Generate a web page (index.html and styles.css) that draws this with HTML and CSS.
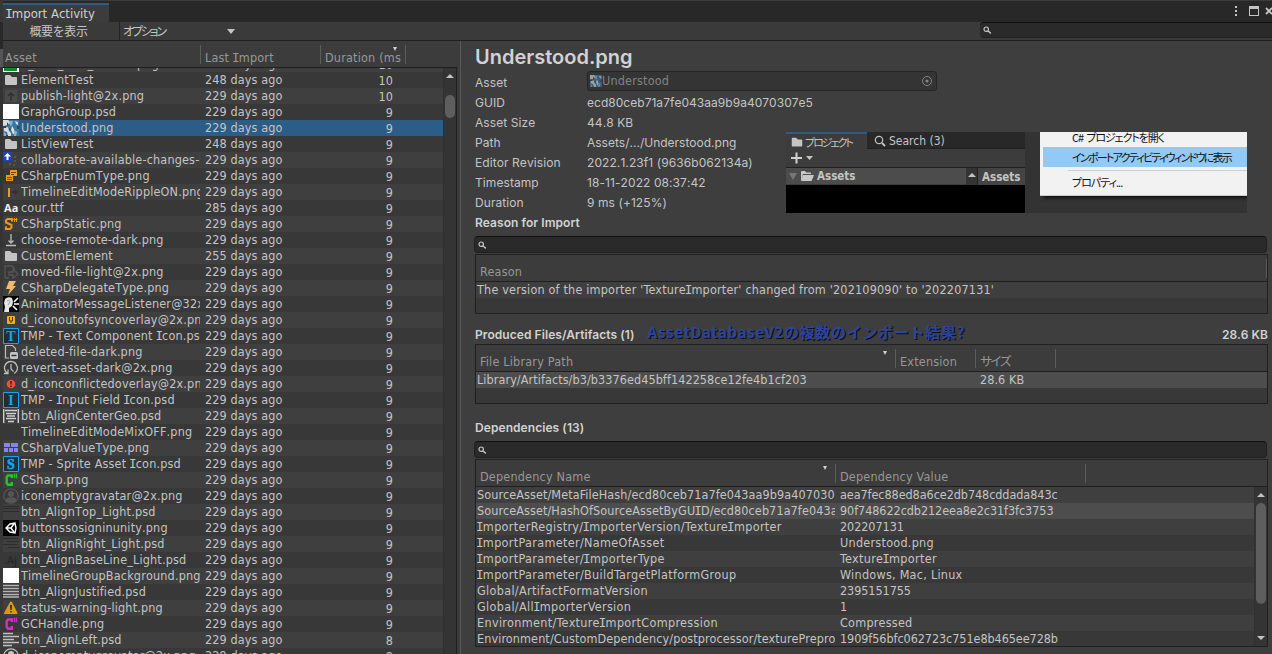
FILE: index.html
```html
<!DOCTYPE html>
<html lang="ja">
<head>
<meta charset="utf-8">
<title>Import Activity</title>
<link rel="stylesheet" href="styles.css">
</head>
<body>
<svg class="defs" width="0" height="0">
  <symbol id="folder" viewBox="0 0 16 16"><path fill="#c4c4c4" d="M2 4q0-1 1-1h4l2 2h4q1 0 1 1v6q0 1-1 1H3q-1 0-1-1z"/></symbol>
  <symbol id="lens" viewBox="0 0 9 9"><circle cx="3.2" cy="3.2" r="2.2" fill="none" stroke="#c4c4c4" stroke-width="1.2"/><path d="M4.8 4.8L7.8 7.4" stroke="#c4c4c4" stroke-width="1.4"/></symbol>
  <symbol id="thumb" viewBox="0 0 16 16"><path fill="#3a76a4" d="M0 0h16v16H0z"/><path fill="#d9dcda" d="M0 0h5l3 2-3 3-5 1zM1 8l4-1 1 4 2 2v3H5l-1-4-3-1zM9 6l2 3v5h-1l-2-4zM12 1l3 1v3l-2-1z"/><path fill="#8ab1ca" d="M6 1h4l-1 4-2 1zM11 10l3 2-1 4h-2zM1 12l2 2v2H1z"/><path fill="#37444c" d="M4 2l2 3-2 1zM0 6h3v2H0zM6 8l2 1-1 2zM14 6h2v3h-2zM3 15h2v1H3z"/></symbol>
  <symbol id="csharp" viewBox="0 0 16 16"><path fill="none" stroke="currentColor" stroke-width="2.400" d="M8.800 6V3.500H5L3.700 5v6L5 12.700h3.800V10"/><path fill="none" stroke="currentColor" stroke-width=".9" d="M11.500 1.500v5M13.500 1.500v5M10.500 3h4M10.500 5h4"/></symbol>
  <symbol id="person" viewBox="0 0 16 16"><circle cx="8" cy="8" r="7.200" fill="none" stroke="currentColor" stroke-width="1.200"/><circle cx="8" cy="6" r="3" fill="currentColor"/><path fill="currentColor" d="M2.500 13q0-3.500 3.500-3.500h4q3.500 0 3.500 3.500-5.500 4-11 0z"/></symbol>
</svg>
<div class="window">
  <div class="edge"><i></i><i></i><i></i><i></i><i></i></div>
  <div class="main">
    <div class="tabs">
      <div class="tab"><i class="cap">I</i>mport Activity</div>
      <svg class="controls" width="40" height="14" viewBox="0 0 40 14"><path fill="#c4c4c4" d="M3 2h2v2H3zM3 6h2v2H3zM3 10h2v2H3zM17 2h10v10H17zM18 5v6h8V5z" fill-rule="evenodd"/><path d="M34 4l6 6M40 4l-6 6" stroke="#c4c4c4" stroke-width="1.800"/></svg>
    </div>
    <div class="toolbar">
      <div class="btn overview">概要を表示</div>
      <div class="btn options"><span>オプション</span><i class="caret"></i></div>
      <div class="topsearch"><svg width="9" height="9"><use href="#lens"/></svg></div>
    </div>
    <div class="panes">
      <section class="list">
        <div class="thead"><span class="c1">Asset</span><span class="c2">Last <i class="cap">I</i>mport</span><span class="c3">Duration (ms<i class="sort"></i></span></div>
        <div class="body">
          <div class="rows">
            <div class="row"><svg><path fill="#fff" d="M0 0h16v16H0z"/><path fill="#118a2c" d="M1 0h13v15H1z"/></svg><b>d_tree_icon_branch.png</b><span>229 days ago</span><em>10</em></div>
            <div class="row"><svg><use href="#folder"/></svg><b>ElementTest</b><span>248 days ago</span><em>10</em></div>
            <div class="row"><svg><path fill="#4b4b4b" d="M2 2h12v12H2z"/><path fill="none" stroke="#303030" stroke-width="1.500" d="M8 13V5M5 8l3-3 3 3"/></svg><b>publish-light@2x.png</b><span>229 days ago</span><em>10</em></div>
            <div class="row"><svg><path fill="#fff" d="M0 0h16v15H0z"/></svg><b>GraphGroup.psd</b><span>229 days ago</span><em>9</em></div>
            <div class="row selected"><svg><use href="#thumb"/></svg><b>Understood.png</b><span>229 days ago</span><em>9</em></div>
            <div class="row"><svg><use href="#folder"/></svg><b>ListViewTest</b><span>248 days ago</span><em>9</em></div>
            <div class="row"><svg><path fill="#1746b8" d="M0 0h9v9H0z"/><path fill="#fff" d="M4.500 1L8 4.500H5.500V8h-2V4.500H1z"/><path fill="#555" d="M11 4h2v2h-2zM11 8h2v2h-2zM6 11h2v2H6zM10 12h2v2h-2z"/></svg><b>collaborate-available-changes-light.png</b><span>229 days ago</span><em>9</em></div>
            <div class="row"><svg><path fill="#e89d1c" d="M7 2h7v6H7zM3 7h7v6H3z"/><path stroke="#6e4a0c" d="M8 4.500h5M8 6.500h3M4 9.500h5M4 11.500h5"/></svg><b>CSharpEnumType.png</b><span>229 days ago</span><em>9</em></div>
            <div class="row"><svg><path fill="#d9a514" d="M5 4h2v9H5z"/><path fill="#303030" d="M9 7h3V5l3 3-3 3V9H9z"/></svg><b>TimelineEditModeRippleON.png</b><span>229 days ago</span><em>9</em></div>
            <div class="row"><svg><text class="aa" x="1" y="12">Aa</text></svg><b>cour.ttf</b><span>285 days ago</span><em>9</em></div>
            <div class="row"><svg><path fill="none" stroke="#e59a1c" stroke-width="2" d="M9 5.500V3H4.500L3 4.500v2L8.500 9v2.500L7 13H3v-2.500"/><path stroke="#e59a1c" stroke-width="1" d="M11.500 2v4M13.500 2v4M10.500 3.500h4"/></svg><b>CSharpStatic.png</b><span>229 days ago</span><em>9</em></div>
            <div class="row"><svg><path fill="none" stroke="#bdbdbd" stroke-width="1.300" d="M8 2v9M5.500 8.500L8 11l2.500-2.500M3 13.500h10"/></svg><b>choose-remote-dark.png</b><span>229 days ago</span><em>9</em></div>
            <div class="row"><svg><use href="#folder"/></svg><b>CustomElement</b><span>255 days ago</span><em>9</em></div>
            <div class="row"><svg><path fill="none" stroke="#555" stroke-width="1.300" d="M2 14V2h7l3 3M2 14h4M6 8h4V5l5 5-5 4v-3H6z"/></svg><b>moved-file-light@2x.png</b><span>229 days ago</span><em>9</em></div>
            <div class="row"><svg><path fill="#f0b96c" d="M6 1h7l-3 5h3l-8 9 2-6H3z"/></svg><b>CSharpDelegateType.png</b><span>229 days ago</span><em>9</em></div>
            <div class="row"><svg><path d="M0 0h16v16H0z"/><path fill="#e6e6e6" d="M2 3q3-3 7-1l1 4-1 4-3 2v4H1l1-5-1-4z"/><path fill="none" stroke="#999" d="M4 5q3-2 3 1l-2 3"/><path stroke="#fff" stroke-width="1.600" d="M11 6l4-4M11 8h5M10 10l4 4"/></svg><b>AnimatorMessageListener@32x.png</b><span>229 days ago</span><em>9</em></div>
            <div class="row"><svg><rect x="4" y="4" width="8" height="8" rx="1" fill="#efae22"/><path fill="none" stroke="#4b3c16" d="M6.500 5v4h3V5M8 9v2"/></svg><b>d_iconoutofsyncoverlay@2x.png</b><span>229 days ago</span><em>9</em></div>
            <div class="row"><svg><path class="tile" d="M.5.5h15v15H.5z"/><text class="tmp" x="8" y="13">T</text></svg><b>TMP - Text Component <i class="cap">I</i>con.psd</b><span>229 days ago</span><em>9</em></div>
            <div class="row"><svg><path fill="none" stroke="#bdbdbd" stroke-width="1.200" d="M6 14H2.500V1.500h7l3 3V7"/><rect x="7" y="8" width="8" height="7" rx="1.500" fill="#c4c4c4"/><path stroke="#333" stroke-width="1.500" d="M8.500 11.500h5"/></svg><b>deleted-file-dark.png</b><span>229 days ago</span><em>9</em></div>
            <div class="row"><svg><path fill="none" stroke="#bdbdbd" stroke-width="1.300" d="M5 13.500Q1 11 1.500 7 3 1.500 8 1.500t6.500 6q0 4-3.500 6M8 4v5l2.500 2.500M1 13.500h4v-4"/></svg><b>revert-asset-dark@2x.png</b><span>229 days ago</span><em>9</em></div>
            <div class="row"><svg><circle cx="8" cy="8" r="4.300" fill="#ef4c40"/><path fill="#4a1511" d="M7.300 5h1.400v3.500H7.300zM7.300 9.500h1.400V11H7.300z"/></svg><b>d_iconconflictedoverlay@2x.png</b><span>229 days ago</span><em>9</em></div>
            <div class="row"><svg><path class="tile" d="M.5.5h15v15H.5z"/><text class="tmp" x="8" y="13">I</text></svg><b>TMP - <i class="cap">I</i>nput Field <i class="cap">I</i>con.psd</b><span>229 days ago</span><em>9</em></div>
            <div class="row"><svg><path stroke="#d0d0d0" stroke-width="1.400" d="M.7 1v14M15.300 1v14M2 2.500h12M3 5.500h10M4 8h8M3 10.500h10M5 13.500h6"/></svg><b>btn_AlignCenterGeo.psd</b><span>229 days ago</span><em>9</em></div>
            <div class="row"><svg></svg><b>TimelineEditModeMixOFF.png</b><span>229 days ago</span><em>9</em></div>
            <div class="row"><svg><path fill="#8684e6" d="M1 3h6v4H1zM8 3h7v4H8zM1 8h4v4H1zM6 8h4v4H6zM11 8h4v4h-4z"/></svg><b>CSharpValueType.png</b><span>229 days ago</span><em>9</em></div>
            <div class="row"><svg><path class="tile" d="M.5.5h15v15H.5z"/><text class="tmp heavy" x="8" y="13">S</text></svg><b>TMP - Sprite Asset <i class="cap">I</i>con.psd</b><span>229 days ago</span><em>9</em></div>
            <div class="row"><svg class="green"><use href="#csharp"/></svg><b>CSharp.png</b><span>229 days ago</span><em>9</em></div>
            <div class="row"><svg class="dim"><use href="#person"/></svg><b>iconemptygravatar@2x.png</b><span>229 days ago</span><em>9</em></div>
            <div class="row"><svg><path stroke="#2c2c2c" d="M0 2.500h16M0 4.500h16M0 7.500h16"/></svg><b>btn_AlignTop_Light.psd</b><span>229 days ago</span><em>9</em></div>
            <div class="row"><svg><path d="M0 0h16v16H0z"/><path fill="none" stroke="#fff" stroke-width="1.400" d="M3 8l4-4 5-1 1 5-1 5-5-1zM3 8h5M8 8l3-4M8 8l3 4"/></svg><b>buttonssosigninunity.png</b><span>229 days ago</span><em>9</em></div>
            <div class="row"><svg><path stroke="#2c2c2c" d="M0 2.500h15M4 5.500h12M0 8.500h14M5 11.500h11"/></svg><b>btn_AlignRight_Light.psd</b><span>229 days ago</span><em>9</em></div>
            <div class="row"><svg><text class="aj" x="1" y="12">.Aj</text></svg><b>btn_AlignBaseLine_Light.psd</b><span>229 days ago</span><em>9</em></div>
            <div class="row"><svg><path fill="#fff" d="M0 0h16v15H0z"/></svg><b>TimelineGroupBackground.png</b><span>229 days ago</span><em>9</em></div>
            <div class="row"><svg><path stroke="#b5b5b5" stroke-width="1.500" d="M0 1.500h16M0 4.500h16M0 7.500h16M0 10.500h16M0 13h16"/></svg><b>btn_AlignJustified.psd</b><span>229 days ago</span><em>9</em></div>
            <div class="row"><svg><path fill="#d99b08" d="M7 2q1-1 2 0l5.500 11q0 1-1 1h-12q-1 0-.5-1z"/><path fill="#292211" d="M7 5h2l-.4 5H7.400zM7.300 11h1.400v1.500H7.300z"/></svg><b>status-warning-light.png</b><span>229 days ago</span><em>9</em></div>
            <div class="row"><svg class="pink"><use href="#csharp"/></svg><b>GCHandle.png</b><span>229 days ago</span><em>9</em></div>
            <div class="row"><svg><path stroke="#c0c0c0" stroke-width="1.500" d="M0 1.500h10M0 4.500h16M0 7.500h11M0 10.500h16M0 13.500h9"/></svg><b>btn_AlignLeft.psd</b><span>229 days ago</span><em>8</em></div>
            <div class="row"><svg class="lit"><use href="#person"/></svg><b>d_iconemptygravatar@2x.png</b><span>229 days ago</span><em>8</em></div>
          </div>
          <div class="scroll"><i class="up"></i><i class="knob"></i></div>
        </div>
      </section>
      <section class="detail">
        <h1>Understood.png</h1>
        <div class="info">
          <dl>
            <dt>Asset</dt><dd class="field"><svg width="12" height="12"><use href="#thumb"/></svg><span>Understood</span><svg class="pick" width="12" height="12"><circle cx="6" cy="6" r="4.500" fill="none" stroke="#858585"/><circle cx="6" cy="6" r="1.600" fill="#858585"/></svg></dd>
            <dt>GUID</dt><dd class="guid">ecd80ceb71a7fe043aa9b9a4070307e5</dd>
            <dt>Asset Size</dt><dd>44.8 KB</dd>
            <dt>Path</dt><dd class="path">Assets/.../Understood.png</dd>
            <dt>Editor Revision</dt><dd>2022.1.23f1 (9636b062134a)</dd>
            <dt>Timestamp</dt><dd>18-11-2022 08:37:42</dd>
            <dt>Duration</dt><dd>9 ms (+125%)</dd>
          </dl>
          <div class="preview">
            <div class="project">
              <div class="ptabs"><div class="ptab on"><svg width="14" height="14" viewBox="0 0 16 16"><use href="#folder"/></svg><span>プロジェクト</span></div><div class="ptab"><svg width="12" height="12"><circle cx="5" cy="5" r="3.700" fill="none" stroke="#c4c4c4" stroke-width="1.200"/><path stroke="#c4c4c4" stroke-width="1.800" d="M8 8l3 3"/></svg><span class="ps">Search (3)</span></div></div>
              <div class="padd"><svg width="24" height="12"><path stroke="#d0d0d0" stroke-width="2" d="M0 6h11M5.500.5v11"/><path fill="#c4c4c4" d="M15 4h7l-3.500 4z"/></svg></div>
              <div class="pcols"><div class="pleft"><svg width="25" height="12"><path fill="#777" d="M0 3h8l-4 7z"/><path fill="#c8c8c8" d="M12 10V2q0-1 1-1h3l1.500 1.500H22V4h-8l-2 6zM14 5h11l-2 5q0 1-1 1h-9q-1 0-1-1z"/></svg>Assets</div><div class="pscroll"><i class="up"></i></div><div class="pright">Assets</div></div>
            </div>
            <div class="menuwrap"><div class="menu"><div class="mi first">C# プロジェクトを開く</div><div class="mi hot">インポートアクティビティウィンドウに表示</div><hr><div class="mi last">プロパティ...</div></div></div>
          </div>
        </div>
        <h2>Reason for Import</h2>
        <div class="search"><svg width="9" height="9"><use href="#lens"/></svg></div>
        <div class="table reason">
          <div class="thead"><span class="w">Reason</span></div>
          <div class="tr"><span class="long">The version of the importer 'Texture<i class="cap">I</i>mporter' changed from '202109090' to '202207131'</span></div>
        </div>
        <div class="produced"><h2>Produced Files/Artifacts (1)</h2><span class="note">AssetDatabaseV2の複数のインポート結果?</span><h2 class="total">28.6 KB</h2></div>
        <div class="table files">
          <div class="thead"><span class="w f1">File Library Path<i class="sort"></i></span><span class="f2">Extension</span><span class="f3 kana">サイズ</span></div>
          <div class="tr hl"><span class="f1">Library/Artifacts/b3/b3376ed45bff142258ce12fe4b1cf203</span><span class="f2"></span><span class="f3">28.6 KB</span></div>
        </div>
        <h2 class="dep">Dependencies (13)</h2>
        <div class="search"><svg width="9" height="9"><use href="#lens"/></svg></div>
        <div class="table deps">
          <div class="thead"><span class="w d1">Dependency Name<i class="sort"></i></span><span class="d2">Dependency Value</span></div>
          <div class="dbody">
            <div class="drows">
              <div class="tr"><span class="d1 hashed">SourceAsset/MetaFileHash/ecd80ceb71a7fe043aa9b9a4070307e5</span><span class="d2 hash">aea7fec88ed8a6ce2db748cddada843c</span></div>
              <div class="tr hl"><span class="d1 hashed">SourceAsset/HashOfSourceAssetByGU<i class="cap">I</i>D/ecd80ceb71a7fe043aa9b9a4070307e5</span><span class="d2 hash">90f748622cdb212eea8e2c31f3fc3753</span></div>
              <div class="tr"><span class="d1"><i class="cap">I</i>mporterRegistry/<i class="cap">I</i>mporterVersion/Texture<i class="cap">I</i>mporter</span><span class="d2 hash">202207131</span></div>
              <div class="tr"><span class="d1"><i class="cap">I</i>mportParameter/NameOfAsset</span><span class="d2 plain">Understood.png</span></div>
              <div class="tr"><span class="d1"><i class="cap">I</i>mportParameter/<i class="cap">I</i>mporterType</span><span class="d2">Texture<i class="cap">I</i>mporter</span></div>
              <div class="tr"><span class="d1"><i class="cap">I</i>mportParameter/BuildTargetPlatformGroup</span><span class="d2 plain">Windows, Mac, Linux</span></div>
              <div class="tr"><span class="d1">Global/ArtifactFormatVersion</span><span class="d2 hash">2395151755</span></div>
              <div class="tr"><span class="d1">Global/All<i class="cap">I</i>mporterVersion</span><span class="d2">1</span></div>
              <div class="tr"><span class="d1">Environment/Texture<i class="cap">I</i>mportCompression</span><span class="d2 plain">Compressed</span></div>
              <div class="tr"><span class="d1 hashed">Environment/CustomDependency/postprocessor/texturePreprocessor</span><span class="d2 hash">1909f56bfc062723c751e8b465ee728b</span></div>
            </div>
            <div class="scroll"><i class="up"></i><i class="knob"></i><i class="down"></i></div>
          </div>
        </div>
      </section>
    </div>
  </div>
</div>
</body>
</html>
```

FILE: styles.css
```css
* { box-sizing: border-box; }
body { margin: 0; background: #3c3c3c; color: #c4c4c4; font: 12.5px/16px "DejaVu Sans Condensed", "DejaVu Sans", "Noto Sans CJK JP", sans-serif; font-kerning: none; overflow: hidden; }
.defs { display: block; width: 0; height: 0; position: absolute; }
.cap { font-family: "DejaVu Sans Mono", monospace; font-style: normal; line-height: 1; margin: 0 -1px; }
.window { display: flex; width: 1272px; height: 654px; overflow: hidden; white-space: nowrap; }
.edge { width: 3px; background: #383838; display: grid; grid-template-rows: 22px 27px 18px 180px 1fr; }
.edge i:nth-child(2) { background: #282828; }
.edge i:nth-child(3) { background: #555; }
.edge i:nth-child(4) { background: #343434; }
.main { flex: 1; min-width: 0; display: flex; flex-direction: column; }
.tabs { height: 22px; border-top: 1px solid #3c3c3c; background: #282828; display: flex; justify-content: space-between; padding-top: 2px; }
.tab { width: 106px; border-top: 2px solid #2c5d87; background: #3c3c3c; padding: 1px 0 0 3px; font-size: 13px; color: #d0d0d0; }
.controls { margin: 1px 0 0 0; }
.toolbar { height: 19px; background: #3a3a3a; display: flex; border-bottom: 1px solid #202020; }
.btn { font: 12px/18px "Noto Sans CJK JP", sans-serif; color: #c4c4c4; height: 18px; }
.overview { width: 117px; border-right: 1px solid #232323; text-align: center; padding-right: 5px; letter-spacing: -.4px; }
.options { width: 120px; padding: 0 5px 0 3px; display: flex; justify-content: space-between; align-items: center; }
.options span { font-feature-settings: "palt"; letter-spacing: -2.2px; }
.caret { border: 4px solid transparent; border-top: 5px solid #c4c4c4; border-bottom: 0; }
.topsearch { margin-left: auto; width: 292px; height: 16px; background: #2a2a2a; border-top: 1px solid #111; border-bottom: 1px solid #222; border-radius: 4px 0 0 4px; padding: 3px 0 0 3px; display: flex; }
.panes { display: flex; flex: 1; min-height: 0; }
.list { width: 457px; display: flex; flex-direction: column; border-right: 3px solid #3c3c3c; }
.thead { flex: none; height: 27px; border-bottom: 1px solid #1f1f1f; background: #3c3c3c; color: #979797; display: flex; padding-top: 4px; letter-spacing: .2px; }
.thead span { height: 19px; padding: 5px 0 0 4px; border-right: 1px solid #5c5c5c; position: relative; flex: none; }
.list .c1 { width: 198px; padding-left: 2px; }
.list .c2 { width: 120px; }
.list .c3 { width: 85px; }
.sort { position: absolute; right: 8px; top: 2px; border: 2.5px solid transparent; border-top: 4px solid #d0d0d0; border-bottom: 0; }
.body { flex: 1; min-height: 0; display: flex; border-right: 1px solid #1f1f1f; overflow: hidden; }
.rows { width: 440px; margin-top: -12px; flex: none; letter-spacing: .12px; }
.row { height: 16px; display: flex; background: #383838; line-height: 16px; }
.row:nth-child(odd) { background: #3f3f3f; }
.row.selected { background: #2c5d87; }
.row svg { width: 16px; height: 16px; flex: none; margin-right: 2px; }
.row b { font-weight: normal; width: 179px; overflow: hidden; margin-right: 5px; flex: none; height: 16px; letter-spacing: .17px; }
.row span { width: 140px; }
.row em { font-style: normal; width: 48px; text-align: right; padding-top: 1px; }
.aa { font: bold 11px "Open Sans", sans-serif; fill: #eee; }
.aj { font: 11px "Noto Sans", sans-serif; fill: #252525; }
.tile { fill: #222d34; stroke: #15a5ec; stroke-width: 1; }
.tmp { font: bold 14px "Liberation Serif", serif; fill: #15a5ec; text-anchor: middle; letter-spacing: 0; }
.heavy { stroke: #15a5ec; stroke-width: .6; }
.green { color: #25c331; }
.pink { color: #d32fc0; }
.dim { color: #565656; }
.lit { color: #c4c4c4; }
.scroll { flex: 1; background: #343434; display: flex; flex-direction: column; align-items: center; border-left: 1px solid #303030; padding-top: 6px; }
.up { border: 4px solid transparent; border-bottom: 4px solid #c4c4c4; border-top: 0; flex: none; height: 4px; }
.down { border: 4px solid transparent; border-top: 4px solid #c4c4c4; border-bottom: 0; }
.knob { width: 10px; background: #5e5e5e; border-radius: 5px; height: 23px; margin-top: 17px; }
.detail { flex: 1; min-width: 0; border-left: 1px solid #595959; background: #3e3e3e; padding: 4px 4px 0 14px; font-family: Inter, "Noto Sans CJK JP", sans-serif; }
h1 { font: 600 20px/24px Inter, sans-serif; margin: 0 0 2px 0; height: 24px; color: #d2d2d2; }
h2 { font: 600 12px/16px Inter, sans-serif; margin: 0; color: #d2d2d2; letter-spacing: .07px; }
.info { display: flex; height: 142px; }
dl { margin: 0; display: grid; grid-template-columns: 112px 350px; grid-auto-rows: 20px; font-size: 12px; line-height: 24px; letter-spacing: .08px; }
dt, dd { margin: 0; }
.guid { letter-spacing: .03px; }
.path { letter-spacing: 0; }
.field { height: 20px; border: 1px solid #252525; background: #343434; border-radius: 3px; display: flex; align-items: center; padding: 0 3px 0 2px; color: #828282; font: 12.5px/18px "DejaVu Sans Condensed", sans-serif; letter-spacing: .2px; }
.field > svg:first-child { opacity: .65; }
.field .pick { margin-left: auto; }
.preview { margin: 61px 0 0 -151px; width: 461px; height: 81px; background: #333; display: flex; position: relative; overflow: hidden; flex: none; }
.project { width: 239px; flex: none; background: #000; margin-right: 15px; font: 12px/16px "DejaVu Sans Condensed", sans-serif; }
.ptabs { display: flex; height: 17px; background: #282828; }
.ptab { display: flex; align-items: center; padding: 2px 0 0 7px; gap: 3px; border-bottom: 1px solid #202020; flex: 1; font-size: 12px; }
.ptab.on { flex: none; width: 81px; padding: 0 0 0 4px; gap: 1px; border: 0; border-top: 2px solid #2c5d87; background: #3c3c3c; font: 11px/14px "Noto Sans CJK JP", sans-serif; font-feature-settings: "palt"; }
.ptab.on span { letter-spacing: -2px; }
.padd { background: #3c3c3c; height: 18px; padding: 3px 0 0 5px; }
.padd svg, .pcols svg { display: block; }
.pcols { height: 18px; border-top: 1px solid #202020; display: flex; font-weight: bold; line-height: 16px; font-size: 11.5px; }
.pleft { width: 180px; background: #4c4c4c; display: flex; align-items: center; gap: 3px; padding-left: 3px; border-bottom: 1px solid #3c3c3c; }
.pscroll { width: 12px; background: #343434; display: flex; justify-content: center; padding-top: 5px; border-right: 1px solid #202020; }
.pright { flex: 1; background: #444; padding: 1px 0 0 4px; }
.menuwrap { flex: 1; min-width: 0; }
.menu { height: 64px; background: #f2f2f2; color: #111; border-bottom: 1px solid #ccc; font: 11px/20px "Noto Sans CJK JP", sans-serif; font-feature-settings: "palt"; box-shadow: 4px 2px 3px #111; padding-left: 3px; }
.mi { padding-left: 29px; height: 20px; }
.mi.first { height: 15px; line-height: 10px; letter-spacing: -1.1px; word-spacing: 2px; }
.mi.hot { background: #91c9f7; letter-spacing: -1.75px; }
.mi.last { letter-spacing: -1px; line-height: 18px; }
.menu hr { margin: 3px 0 2px 25px; border: 0; height: 1px; background: #d0d0d0; }
.info + h2 { margin-top: 2px; }
.search { height: 17px; margin: 5px 1px 1px -1px; background: #2a2a2a; border: 1px solid #202020; border-top-color: #111; border-radius: 4px; padding: 4px 0 0 3px; display: flex; }
.table { border: 1px solid #202020; background: #383838; width: 793px; font: 12.5px/16px "DejaVu Sans Condensed", "Noto Sans CJK JP", sans-serif; }
.reason, .files { height: 60px; }
.reason .w { flex: 1; }
.tr { height: 16px; display: flex; background: #383838; letter-spacing: .33px; }
.tr span { padding-left: 4px; overflow: hidden; flex: none; height: 16px; }
.tr span:first-child { padding-left: 1px; }
.tr:nth-child(odd), .reason .tr { background: #3f3f3f; }
.tr.hl { background: #4d4d4d; }
.files .tr { letter-spacing: .08px; }
.tr .long { letter-spacing: .19px; }
.tr .hashed { letter-spacing: .1px; }
.tr .plain { letter-spacing: .26px; }
.tr .hash { letter-spacing: -.06px; }
.produced { display: flex; height: 30px; padding-top: 11px; align-items: center; }
.note { margin: -5px 0 0 13px; font: bold 15px/20px "Noto Sans CJK JP", sans-serif; color: #2c439d; text-shadow: 1px 1px #101010; letter-spacing: .7px; }
.total { margin-left: auto; }
.f1 { width: 420px; }
.f2, .f3 { width: 80px; }
.kana { letter-spacing: -2.6px; }
.dep { margin-top: 16px; }
.deps { height: 188px; display: flex; flex-direction: column; }
.d1 { width: 360px; }
.tr .d1 { width: 359px; margin-right: 1px; }
.d2 { width: 250px; }
.dbody { flex: 1; display: flex; min-height: 0; }
.drows { width: 778px; overflow: hidden; }
.deps .knob { margin-top: 6px; height: 101px; }
.deps .down { margin: auto 0 6px; }
```
